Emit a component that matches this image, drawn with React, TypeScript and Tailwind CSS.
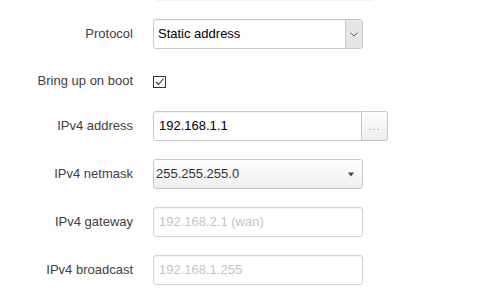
import { ReactNode } from "react"

function Row({ label, children, h = "h-[30px] mb-[18px]" }: { label: string; children: ReactNode; h?: string }) {
  return (
    <div className={`flex items-center ${h}`}>
      <div className="w-[133px] text-right text-[13px] text-[#404040]">{label}</div>
      <div className="ml-[20px] flex items-center h-full">{children}</div>
    </div>
  )
}

export default function App() {
  return (
    <div className="w-[498px] h-[298px] bg-white overflow-hidden font-['Liberation_Sans',Arial,sans-serif]">
      <div className="ml-[156px] w-[217px] h-px bg-[#f2f2f2]"></div>
      <div className="pt-[18px]">
        <Row label="Protocol">
          <div className="flex w-[210px] h-[30px] border border-[#c8c8c8] rounded-[3px] shadow-[inset_0_1px_1px_rgba(0,0,0,0.06)] overflow-hidden">
            <div className="flex-1 flex items-center pl-[4px] text-[13px] text-black">Static address</div>
            <div className="w-[17px] flex items-center justify-center bg-[#e6e6e6] border-l border-[#c8c8c8]">
              <svg width="8" height="5" viewBox="0 0 8 5">
                <path d="M0.5 0.8 L4 4 L7.5 0.8" fill="none" stroke="#555" strokeWidth="1" />
              </svg>
            </div>
          </div>
        </Row>
        <Row label="Bring up on boot" h="h-[28px] mb-[16px]">
          <div className="w-[13px] h-[12px] border border-[#333] flex items-center justify-center mt-[1px]">
            <svg width="11" height="10" viewBox="0 0 11 10">
              <path d="M2 5 L4.5 7.5 L9.5 1.5" fill="none" stroke="#333" strokeWidth="1.1" />
            </svg>
          </div>
        </Row>
        <Row label="IPv4 address">
          <div className="flex h-[30px]">
            <div className="w-[209px] flex items-center pl-[5px] text-[13px] text-black border border-[#c8c8c8] rounded-l-[3px] shadow-[inset_0_1px_1px_rgba(0,0,0,0.06)]">
              192.168.1.1
            </div>
            <div className="w-[26px] flex items-end justify-center pb-[6px] text-[11px] text-[#999] border border-l-0 border-[#c8c8c8] rounded-r-[3px] bg-gradient-to-b from-white to-[#ececec] tracking-[1px]">
              ...
            </div>
          </div>
        </Row>
        <Row label="IPv4 netmask">
          <div className="flex items-center justify-between w-[210px] h-[30px] pl-[2px] pr-[8px] border border-[#c8c8c8] rounded-[3px] bg-gradient-to-b from-white to-[#eeeeee] text-[13px] text-[#333]">
            <span>255.255.255.0</span>
            <svg width="6" height="5" viewBox="0 0 6 5">
              <path d="M0 0.5 H6 L3 4.5 Z" fill="#444" />
            </svg>
          </div>
        </Row>
        <Row label="IPv4 gateway">
          <div className="w-[210px] h-[30px] flex items-center pl-[5px] text-[13px] text-[#c4c4c4] border border-[#d2d2d2] rounded-[3px] shadow-[inset_0_1px_1px_rgba(0,0,0,0.05)]">
            192.168.2.1 (wan)
          </div>
        </Row>
        <Row label="IPv4 broadcast">
          <div className="w-[210px] h-[30px] flex items-center pl-[5px] text-[13px] text-[#c4c4c4] border border-[#d2d2d2] rounded-[3px] shadow-[inset_0_1px_1px_rgba(0,0,0,0.05)]">
            192.168.1.255
          </div>
        </Row>
      </div>
    </div>
  )
}
